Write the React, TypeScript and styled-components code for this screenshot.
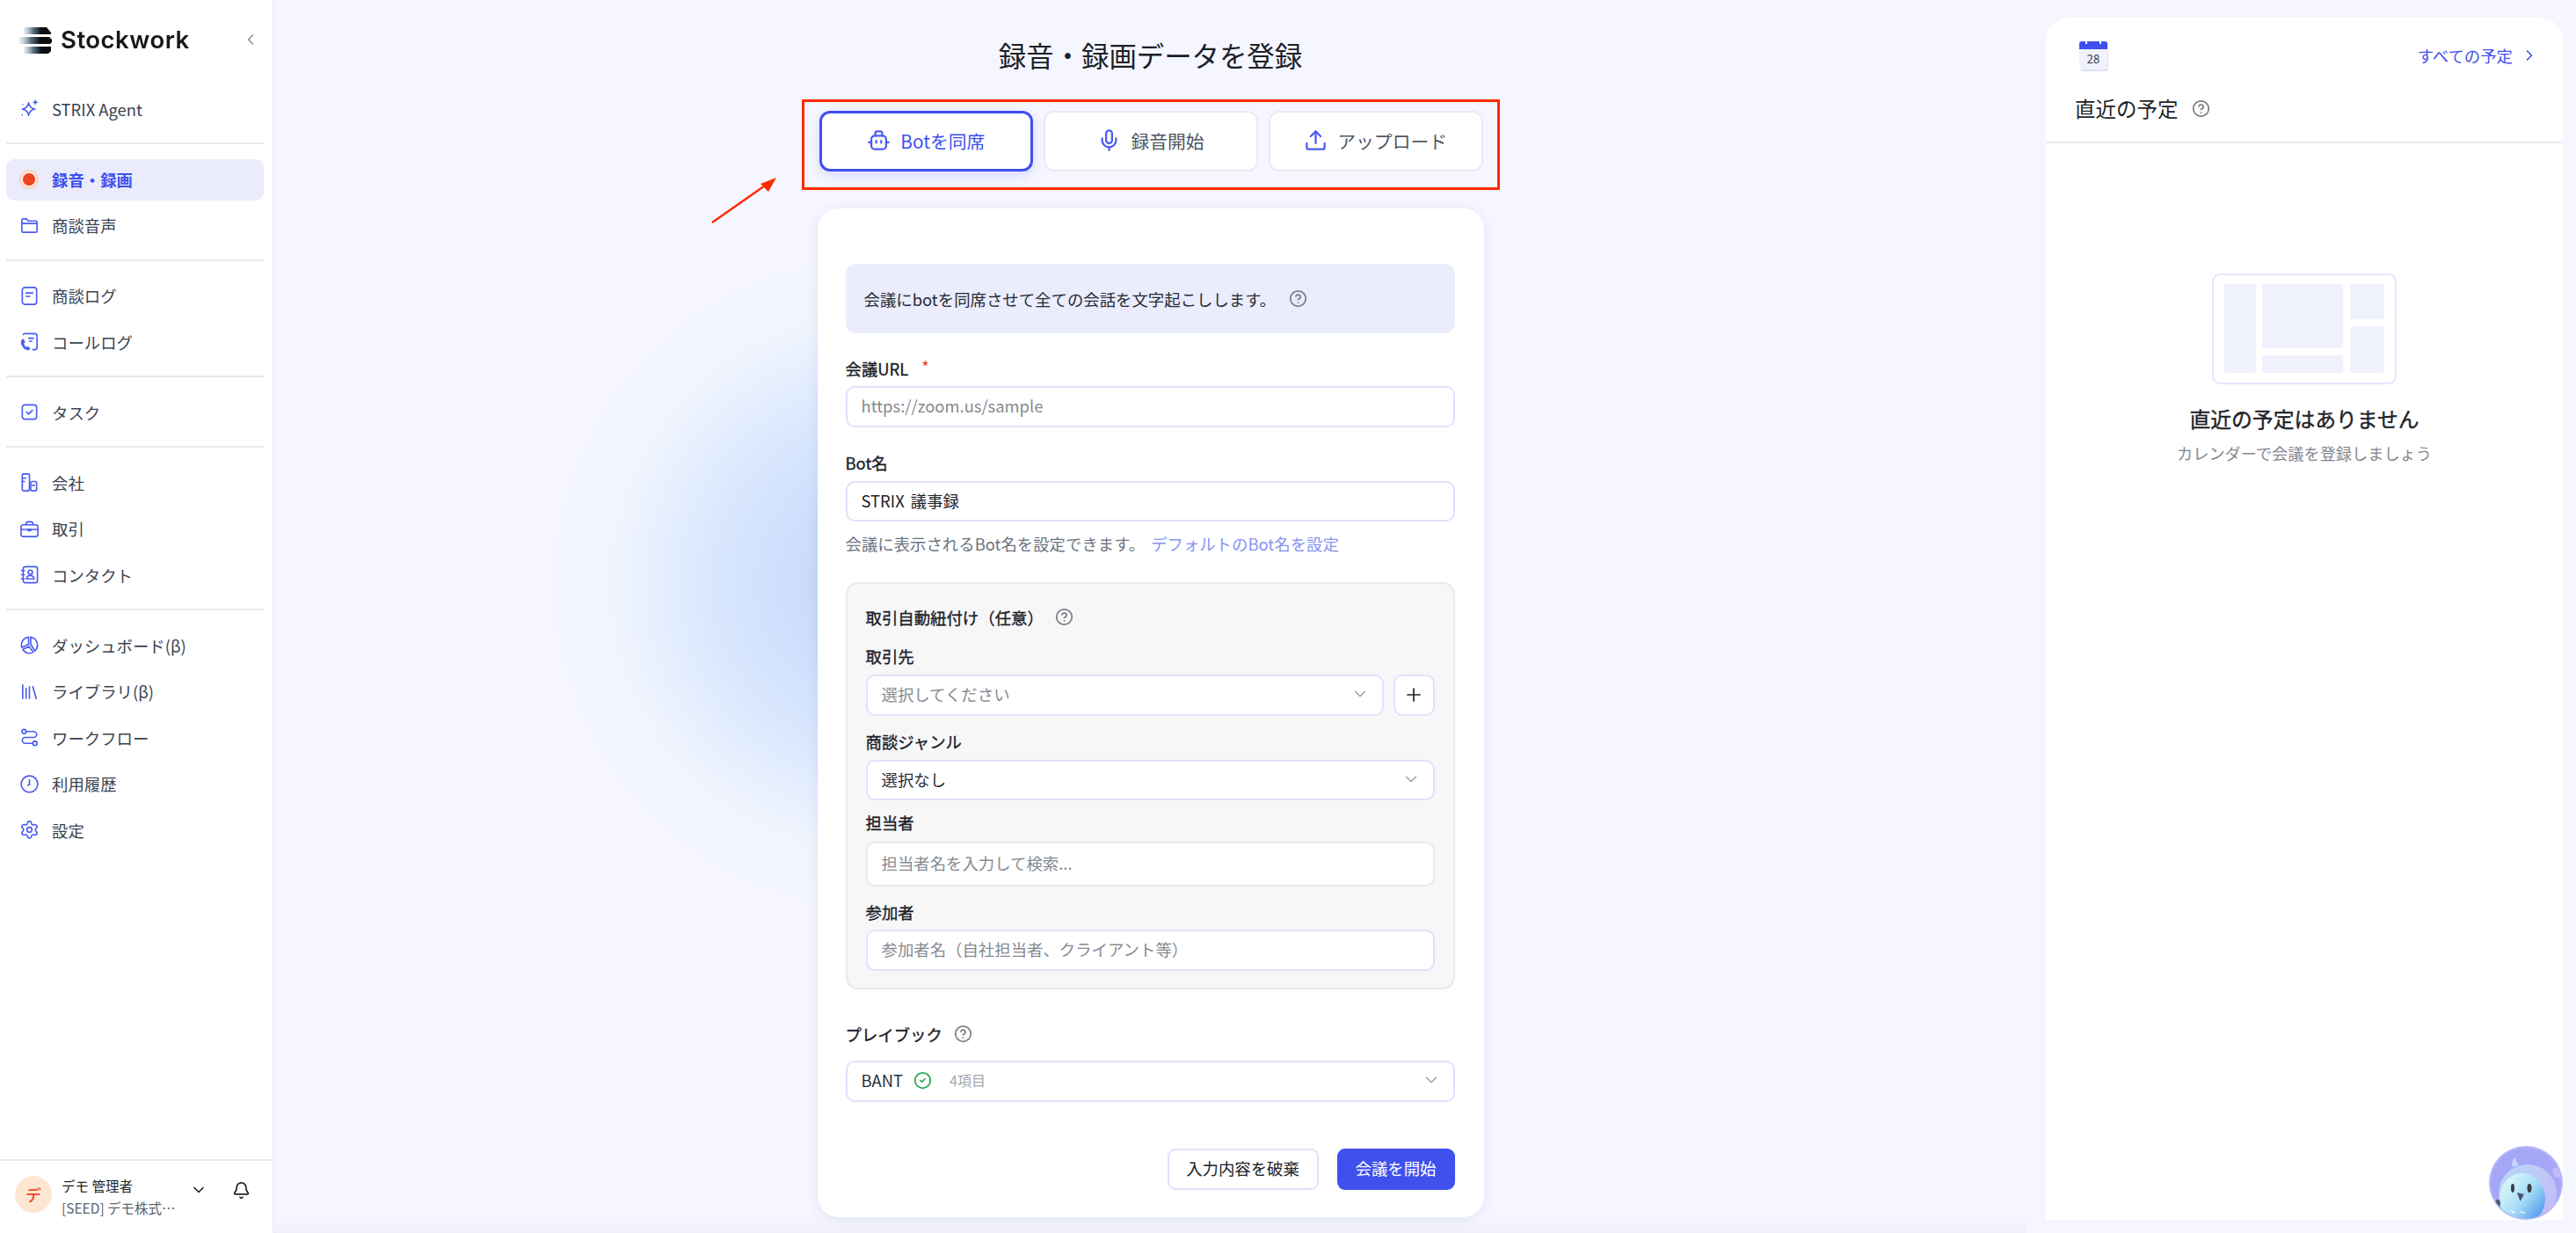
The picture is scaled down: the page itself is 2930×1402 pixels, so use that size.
import React from 'react';
import styled, { createGlobalStyle } from 'styled-components';
import {
  Bell,
  ChevronDown,
  ChevronLeft,
  ChevronRight,
  CircleCheck,
  CircleHelp,
  Library,
  Mic,
  Plus,
  Settings,
  Upload,
} from 'lucide-react';

const BLUE = '#3f50ec';
const ICON_BLUE = '#4a5cf0';
const BORDER = '#dfe2fb';

const GlobalStyle = createGlobalStyle`
  html, body, #root {
    margin: 0;
    height: 100%;
  }
  body {
    font-family: "Noto Sans CJK JP", "Noto Sans", sans-serif;
    color: #1f2329;
    background: #f5f6ff;
    overflow: hidden;
  }
  * {
    box-sizing: border-box;
  }
`;

const Page = styled.div`
  display: flex;
  width: 2930px;
  height: 1402px;
  overflow: hidden;
`;

/* sidebar */

const Sidebar = styled.nav`
  display: flex;
  flex-direction: column;
  width: 312px;
  flex-shrink: 0;
  background: #fff;
  border-right: 2px solid #eceefb;
`;

const LogoBar = styled.div`
  display: flex;
  align-items: center;
  justify-content: space-between;
  height: 84px;
  padding: 28px 15px 22px 22px;
`;

const Logo = styled.div`
  display: flex;
  align-items: center;
  gap: 10px;
  filter: blur(0.6px);
`;

const LogoText = styled.span`
  font-family: Inter, "Liberation Sans", sans-serif;
  font-size: 27.5px;
  font-weight: 600;
  letter-spacing: 0.5px;
  color: #16181c;
`;

const NavList = styled.div`
  margin: 0 10px 0 7px;
`;

const NavGroup = styled.div<{ $first?: boolean }>`
  display: flex;
  flex-direction: column;
  gap: 5.5px;
  padding: 16.5px 0 14.5px;
  border-top: ${(p) => (p.$first ? '0' : '2px solid #e8e9ef')};
`;

const NavItem = styled.div<{ $active?: boolean }>`
  display: flex;
  align-items: center;
  gap: 14px;
  height: 47px;
  padding: 0 0 1px 15px;
  border-radius: 9px;
  font-size: 18.4px;
  font-weight: ${(p) => (p.$active ? 700 : 400)};
  color: ${(p) => (p.$active ? BLUE : '#3a4352')};
  background: ${(p) => (p.$active ? '#eaecfd' : 'transparent')};

  svg {
    width: 23px;
    height: 23px;
    flex-shrink: 0;
    color: ${ICON_BLUE};
  }
`;

const RecordDot = styled.span`
  width: 22px;
  height: 22px;
  flex-shrink: 0;
  margin-right: 1px;
  border-radius: 50%;
  background: radial-gradient(circle, #ee4622 6.5px, #fdeee8 7.5px);
  border: 2px solid #fbd0c0;
`;

const SideFooter = styled.div`
  display: flex;
  align-items: center;
  margin-top: auto;
  height: 84px;
  padding: 0 17px 6px;
  border-top: 2px solid #e8e9ef;
`;

const Avatar = styled.div`
  display: flex;
  align-items: center;
  justify-content: center;
  width: 42px;
  height: 42px;
  flex-shrink: 0;
  border-radius: 50%;
  background: #fde7d3;
  color: #ec4a24;
  font-size: 18px;
  font-weight: 500;
`;

const UserInfo = styled.div`
  width: 143px;
  margin-left: 11px;
  padding-top: 5px;
`;

const UserName = styled.div`
  font-size: 15.5px;
  line-height: 24px;
  color: #1f2329;
`;

const UserOrg = styled.div`
  font-size: 15.5px;
  line-height: 26px;
  color: #5c6470;
  white-space: nowrap;
`;

const FooterActions = styled.div`
  display: flex;
  align-items: center;
  gap: 28px;
  margin: -10px 0 0 3px;
  color: #1f2329;
`;

/* main column */

const Main = styled.main`
  flex: 1;
  display: flex;
  flex-direction: column;
  align-items: center;
  padding-top: 40px;
  background:
    linear-gradient(to bottom, transparent 1382px, #eff0fa 1402px),
    radial-gradient(circle 375px at 688px 663px, #bfd2fb 0%, #dae8fe 53%, #eff4fe 80%, #f5f6ff 100%);
`;

const Column = styled.div`
  width: 758px;
`;

const Title = styled.h1`
  margin: 0;
  font-size: 31.4px;
  font-weight: 400;
  line-height: 46px;
  text-align: center;
  color: #1b2027;
`;

const TabRow = styled.div`
  position: relative;
  display: grid;
  grid-template-columns: repeat(3, 1fr);
  gap: 12px;
  height: 69px;
  margin: 40px 1px 0 2px;
`;

const Tab = styled.div<{ $active?: boolean }>`
  display: flex;
  align-items: center;
  justify-content: center;
  gap: 11px;
  padding-bottom: 2px;
  border-radius: 12px;
  background: #fff;
  font-size: 20.8px;
  color: ${(p) => (p.$active ? BLUE : '#4f5763')};
  border: ${(p) => (p.$active ? `3px solid ${BLUE}` : '2px solid #e9eaf3')};
  box-shadow: ${(p) => (p.$active ? '0 4px 12px rgba(63, 80, 236, 0.18)' : 'none')};

  svg {
    width: 27px;
    height: 27px;
    color: ${ICON_BLUE};
  }
`;

const RedFrame = styled.div`
  position: absolute;
  top: -13px;
  left: -20px;
  right: -19px;
  bottom: -21px;
  border: 3px solid #ff2a00;
  pointer-events: none;
`;

const Arrow = styled.svg`
  position: absolute;
  top: 72px;
  left: -127px;
  width: 85px;
  height: 60px;
`;

const Card = styled.section`
  height: 1147px;
  margin-top: 42px;
  padding: 63px 33px 32px 32px;
  background: #fff;
  border-radius: 24px;
  box-shadow: 0 2px 14px rgba(60, 70, 150, 0.1);
`;

const InfoBox = styled.div`
  display: flex;
  align-items: center;
  gap: 15px;
  height: 79px;
  padding: 0 21px;
  border-radius: 12px;
  background: #ebecfc;
  font-size: 18.4px;
  color: #262b33;
`;

const HelpIcon = styled(CircleHelp)`
  width: 21px;
  height: 21px;
  flex-shrink: 0;
  color: #7a7d83;
`;

const Label = styled.div<{ $top: number; $bottom: number }>`
  display: flex;
  align-items: center;
  gap: 13px;
  height: 24px;
  padding-bottom: 3px;
  margin: ${(p) => p.$top}px 0 ${(p) => p.$bottom}px;
  font-size: 18.4px;
  font-weight: 400;
  -webkit-text-stroke: 0.35px #1b2027;
  color: #1b2027;
`;

const Required = styled.span`
  margin: -6px 0 0 2px;
  color: #f0342a;
  font-size: 18px;
  -webkit-text-stroke: 0;
`;

const TextInput = styled.input<{ $tall?: boolean; $plain?: boolean }>`
  display: block;
  width: 100%;
  height: ${(p) => (p.$tall ? 51 : 46.5)}px;
  padding: 0 16px 2px;
  border: 2px solid ${(p) => (p.$plain ? '#e9eaf3' : BORDER)};
  border-radius: 10px;
  outline: none;
  background: #fff;
  font-family: inherit;
  font-size: 18.4px;
  word-spacing: 3px;
  color: #1f2329;

  &::placeholder {
    color: #858a92;
  }
`;

const HelpText = styled.p`
  margin: 13px 0 0;
  font-size: 18.4px;
  line-height: 24px;
  padding-bottom: 2px;
  color: #6b7380;
`;

const TextLink = styled.a`
  margin-left: 7px;
  color: #8593f5;
`;

const Panel = styled.div`
  height: 463px;
  margin-top: 30px;
  padding: 27px 21px 0;
  background: #f7f7f8;
  border: 2px solid #e9e9ec;
  border-radius: 14px;
`;

const SelectRow = styled.div`
  display: flex;
  gap: 11px;
`;

const Select = styled.div<{ $muted?: boolean }>`
  flex: 1;
  display: flex;
  align-items: center;
  justify-content: space-between;
  height: 46.5px;
  padding: 0 14px 2px 16px;
  background: #fff;
  border: 2px solid ${BORDER};
  border-radius: 10px;
  font-size: 18.4px;
  color: ${(p) => (p.$muted ? '#858a92' : '#2a2f37')};

  > svg {
    width: 22px;
    height: 22px;
    stroke-width: 1.5;
    color: #9a9ea5;
  }
`;

const SelectValue = styled.span`
  display: flex;
  align-items: center;
  gap: 12px;
`;

const GreenCheck = styled(CircleCheck)`
  width: 21px;
  height: 21px;
  color: #1fa855;
`;

const ItemCount = styled.span`
  margin-left: 8px;
  font-size: 16px;
  color: #a2a7b0;
`;

const SquareButton = styled.div`
  display: flex;
  align-items: center;
  justify-content: center;
  width: 47px;
  height: 46.5px;
  background: #fff;
  border: 2px solid ${BORDER};
  border-radius: 10px;
  color: #1f2329;
`;

const Actions = styled.div`
  display: flex;
  justify-content: flex-end;
  gap: 21px;
  margin-top: 53px;
`;

const GhostButton = styled.div`
  display: flex;
  align-items: center;
  justify-content: center;
  width: 172px;
  height: 47px;
  padding-bottom: 2px;
  background: #fff;
  border: 2px solid ${BORDER};
  border-radius: 9px;
  font-size: 18.4px;
  color: #1b2027;
`;

const PrimaryButton = styled.div`
  display: flex;
  align-items: center;
  justify-content: center;
  width: 134px;
  height: 47px;
  padding-bottom: 2px;
  background: ${BLUE};
  border-radius: 9px;
  font-size: 18.4px;
  color: #fff;
`;

/* right panel */

const Aside = styled.aside`
  position: relative;
  width: 588px;
  flex-shrink: 0;
  margin: 20px 15px 15px 22px;
  background: #fff;
  border-radius: 26px 26px 0 0;
`;

const AsideHeader = styled.header`
  height: 143px;
  padding: 27px 28px 0 33px;
  border-bottom: 2px solid #e8e9ef;
`;

const AsideTop = styled.div`
  display: flex;
  align-items: center;
  justify-content: space-between;
  padding-left: 5px;
`;

const CalendarIcon = styled.div`
  position: relative;
  width: 32px;
  height: 32px;
  padding-top: 9px;
  border-radius: 3px;
  background: linear-gradient(${BLUE} 9px, #f1f2fd 9px);
  box-shadow: 1px 2px 0 #dfe2fb;
  font-size: 13px;
  line-height: 22px;
  text-align: center;
  color: #343942;

  &::before,
  &::after {
    content: '';
    position: absolute;
    top: -1px;
    width: 2px;
    height: 4px;
    background: #fff;
  }
  &::before {
    left: 7px;
  }
  &::after {
    right: 7px;
  }
`;

const AllLink = styled.a`
  display: flex;
  align-items: center;
  gap: 9px;
  font-size: 18.4px;
  color: ${BLUE};
`;

const AsideTitle = styled.h2`
  display: flex;
  align-items: center;
  gap: 15px;
  margin: 27px 0 0;
  font-size: 23.5px;
  font-weight: 400;
  line-height: 34px;
  color: #1f2329;
`;

const Empty = styled.div`
  display: flex;
  flex-direction: column;
  align-items: center;
  padding-top: 148px;
`;

const EmptyTitle = styled.div`
  margin-top: 22px;
  font-size: 23.8px;
  font-weight: 400;
  -webkit-text-stroke: 0.4px #1f2329;
  line-height: 34px;
  color: #1f2329;
`;

const EmptyText = styled.div`
  margin-top: 9px;
  font-size: 18.2px;
  line-height: 26px;
  color: #85888f;
`;

const HelperBird = styled.svg`
  position: absolute;
  right: 0;
  bottom: 0;
  width: 84px;
  height: 84px;
`;

/* icons */

const StrokeIcon: React.FC<{ children: React.ReactNode }> = ({ children }) => (
  <svg viewBox="0 0 24 24" fill="none" stroke="currentColor" strokeWidth="1.7" strokeLinecap="round" strokeLinejoin="round">
    {children}
  </svg>
);

const LogoMark = () => (
  <svg width="37" height="33" viewBox="0 0 37 33">
    <defs>
      <linearGradient id="logoFade" x1="0" x2="1" y1="0" y2="0">
        <stop offset="0" stopColor="#b4c6d6" stopOpacity="0.3" />
        <stop offset="0.35" stopColor="#56707f" />
        <stop offset="0.65" stopColor="#0c0e12" />
        <stop offset="1" stopColor="#0c0e12" />
      </linearGradient>
    </defs>
    <g fill="url(#logoFade)">
      <path d="M5 2h26l5 6v2H5z" />
      <path d="M0 13h34l3 3v3l-2 2H0z" />
      <path d="M5 24h31v5l-3 3H5z" />
    </g>
  </svg>
);

const Sparkle = () => (
  <StrokeIcon>
    <path d="M11 5c.8 4.6 2.6 6.600 7.500 7.500-4.900.9-6.700 2.900-7.500 7.500-.8-4.600-2.600-6.600-7.500-7.500C8.400 11.600 10.200 9.600 11 5z" />
    <path d="M19 2.500v4M17 4.500h4" />
    <path d="M3.500 19.500h.01M4 7h.01" />
  </StrokeIcon>
);

const FolderIcon = () => (
  <StrokeIcon>
    <path d="M3 5.500A1.500 1.500 0 0 1 4.500 4h4l2 2.500h9A1.500 1.500 0 0 1 21 8v10.500a1.500 1.500 0 0 1-1.500 1.500h-15A1.500 1.500 0 0 1 3 18.500z" />
    <path d="M3 9.500h18" />
  </StrokeIcon>
);

const LogIcon = () => (
  <StrokeIcon>
    <rect x="3.500" y="2" width="17" height="20" rx="3" />
    <path d="M8 8.500h8M8 12.500h4.500" />
  </StrokeIcon>
);

const CallLogIcon = () => (
  <svg viewBox="0 0 24 24" fill="none" stroke="currentColor" strokeWidth="1.7" strokeLinecap="round" strokeLinejoin="round">
    <path d="M6 2.500h12a3 3 0 0 1 3 3v13a3 3 0 0 1-3 3h-2M6 2.500 4.500 3.500" />
    <path d="M11 8h6M12 11.500h3" />
    <path fill="currentColor" stroke="none" d="M5 8.500c-2 .5-3.500 2-3 5 .6 3.800 3.500 7.300 7 8.500 1.800.5 3.600-.4 4-2.200l-3.200-2.400-1.800 1.100c-1.500-1.300-2.300-2.800-2.700-4.600l1.700-1z" />
  </svg>
);

const TaskIcon = () => (
  <StrokeIcon>
    <rect x="3.500" y="3.500" width="17" height="17" rx="3" />
    <path d="m8.500 12 2.500 2.500 4.500-4.500" />
  </StrokeIcon>
);

const CompanyIcon = () => (
  <StrokeIcon>
    <rect x="3.500" y="2" width="8.500" height="20" rx="2" />
    <rect x="13.500" y="11" width="7" height="11" rx="2" />
    <path d="M3.500 7h4M3.500 11h2.500M15.500 15.500h2.500" />
  </StrokeIcon>
);

const DealIcon = () => (
  <StrokeIcon>
    <rect x="2" y="7" width="20" height="14" rx="2.500" />
    <path d="M8 7V5.500A2 2 0 0 1 10 3.500h4a2 2 0 0 1 2 2V7M2 12.500h20" />
    <path d="M10.500 12.500h3v1.500h-3z" fill="currentColor" />
  </StrokeIcon>
);

const ContactIcon = () => (
  <StrokeIcon>
    <rect x="4.500" y="2.500" width="17" height="19" rx="2.500" />
    <circle cx="13" cy="9" r="2.500" />
    <path d="M8.500 17c0-2.500 2-4 4.500-4s4.500 1.500 4.500 4z" />
    <path d="M2.500 7h3.500M2.500 12h3.500M2.500 17h3.500" />
  </StrokeIcon>
);

const DashboardIcon = () => (
  <StrokeIcon>
    <path d="M11 2.500a9.500 9.500 0 0 0-8.500 9.500c0 1 .2 2 .5 2.800L11 11z" />
    <path d="M13.500 2.500a9.500 9.500 0 0 1 8 9.500c0 2.800-1.200 5.300-3.100 7L13.500 11z" />
    <path d="M4 17.200 11.500 13.500l5 7A9.500 9.500 0 0 1 4 17.200z" />
  </StrokeIcon>
);

const FlowIcon = () => (
  <StrokeIcon>
    <circle cx="5.500" cy="5" r="2.500" />
    <circle cx="18.500" cy="19" r="2.500" />
    <path d="M8 5h9a3.500 3.500 0 0 1 0 7H7a3.500 3.500 0 0 0 0 7h9" />
  </StrokeIcon>
);

const ClockIcon = () => (
  <StrokeIcon>
    <circle cx="12" cy="12" r="9.800" />
    <path d="M12 7v5.500l-2 1" />
  </StrokeIcon>
);

const BotIcon = () => (
  <svg viewBox="0 0 24 24" fill="none" stroke="currentColor" strokeWidth="2" strokeLinecap="round" strokeLinejoin="round">
    <rect x="4.500" y="7.500" width="15" height="13.500" rx="3.500" />
    <path d="M8.500 7.500V5A2 2 0 0 1 10.500 3h3a2 2 0 0 1 2 2v2.500" />
    <path d="M2 14h2.500M19.500 14H22M9.500 12.500v2M14.500 12.500v2" />
  </svg>
);

const ArrowDrawing = () => (
  <Arrow viewBox="0 0 85 60">
    <path d="M5 55 68 11" stroke="#ff2a00" strokeWidth="2.500" />
    <path d="M78 4 60 11 69 20z" fill="#ff2a00" />
  </Arrow>
);

const EmptyDrawing = () => (
  <svg width="210" height="126" viewBox="0 0 210 126">
    <rect x="1" y="1" width="208" height="124" rx="8" fill="#fff" stroke="#e2e5fc" strokeWidth="2" />
    <g fill="#eff1fd">
      <rect x="14" y="12" width="36" height="101" rx="3" />
      <rect x="57" y="12" width="92" height="73" rx="3" />
      <rect x="57" y="93" width="92" height="20" rx="3" />
      <rect x="157" y="12" width="39" height="40" rx="3" />
      <rect x="157" y="60" width="39" height="53" rx="3" />
    </g>
  </svg>
);

const Bird = () => (
  <HelperBird viewBox="0 0 84 84">
    <defs>
      <linearGradient id="birdBody" x1="0.1" y1="0.2" x2="0.9" y2="0.9">
        <stop offset="0" stopColor="#d9f6fb" />
        <stop offset="0.5" stopColor="#a5dcf6" />
        <stop offset="1" stopColor="#4f96ec" />
      </linearGradient>
      <linearGradient id="birdHead" x1="0" y1="0" x2="1" y2="0.6">
        <stop offset="0" stopColor="#b9d9f8" />
        <stop offset="1" stopColor="#c3bdf7" />
      </linearGradient>
      <clipPath id="birdClip">
        <circle cx="42" cy="42" r="40.500" />
      </clipPath>
    </defs>
    <circle cx="42" cy="42" r="42" fill="#b4b6f8" />
    <circle cx="42" cy="42" r="40" fill="#a5a7f6" />
    <g clipPath="url(#birdClip)">
      <path d="M27 24c-2-5 0-9 3-11 0 4 2 6 4 9z" fill="#c6d6f9" />
      <path d="M72 26c3-1 5-1 7-3l3 14-8-2z" fill="#c3bdf7" />
      <ellipse cx="44" cy="54" rx="33" ry="33" fill="url(#birdHead)" />
      <ellipse cx="38" cy="60" rx="26" ry="29" fill="url(#birdBody)" />
      <ellipse cx="10" cy="65" rx="3" ry="4" fill="#4f5a72" />
      <ellipse cx="27" cy="48" rx="2" ry="5" fill="#3a3f4c" />
      <ellipse cx="46" cy="48" rx="2.500" ry="5" fill="#3a3f4c" />
      <path d="M32 53l8 2-4.500 8z" fill="#4b5268" />
      <path d="M25 74l4 2M36 75l4 1" stroke="#e6f6fd" strokeWidth="1.500" strokeLinecap="round" />
    </g>
  </HelperBird>
);

const NAV_GROUPS: { icon: React.ReactNode; label: string; active?: boolean }[][] = [
  [{ icon: <Sparkle />, label: 'STRIX Agent' }],
  [
    { icon: <RecordDot />, label: '録音・録画', active: true },
    { icon: <FolderIcon />, label: '商談音声' },
  ],
  [
    { icon: <LogIcon />, label: '商談ログ' },
    { icon: <CallLogIcon />, label: 'コールログ' },
  ],
  [{ icon: <TaskIcon />, label: 'タスク' }],
  [
    { icon: <CompanyIcon />, label: '会社' },
    { icon: <DealIcon />, label: '取引' },
    { icon: <ContactIcon />, label: 'コンタクト' },
  ],
  [
    { icon: <DashboardIcon />, label: 'ダッシュボード(β)' },
    { icon: <Library strokeWidth={1.7} />, label: 'ライブラリ(β)' },
    { icon: <FlowIcon />, label: 'ワークフロー' },
    { icon: <ClockIcon />, label: '利用履歴' },
    { icon: <Settings strokeWidth={1.7} />, label: '設定' },
  ],
];

const App: React.FC = () => (
  <Page>
    <GlobalStyle />
    <Sidebar>
      <LogoBar>
        <Logo>
          <LogoMark />
          <LogoText>Stockwork</LogoText>
        </Logo>
        <ChevronLeft size={20} color="#8d929b" />
      </LogoBar>
      <NavList>
        {NAV_GROUPS.map((group, i) => (
          <NavGroup key={i} $first={i === 0}>
            {group.map((item) => (
              <NavItem key={item.label} $active={item.active}>
                {item.icon}
                {item.label}
              </NavItem>
            ))}
          </NavGroup>
        ))}
      </NavList>
      <SideFooter>
        <Avatar>デ</Avatar>
        <UserInfo>
          <UserName>デモ 管理者</UserName>
          <UserOrg>[SEED] デモ株式…</UserOrg>
        </UserInfo>
        <FooterActions>
          <ChevronDown size={20} />
          <Bell size={21} />
        </FooterActions>
      </SideFooter>
    </Sidebar>

    <Main>
      <Column>
        <Title>録音・録画データを登録</Title>
        <TabRow>
          <Tab $active>
            <BotIcon />
            Botを同席
          </Tab>
          <Tab>
            <Mic strokeWidth={2} />
            録音開始
          </Tab>
          <Tab>
            <Upload strokeWidth={2} />
            アップロード
          </Tab>
          <RedFrame />
          <ArrowDrawing />
        </TabRow>

        <Card>
          <InfoBox>
            会議にbotを同席させて全ての会話を文字起こしします。
            <HelpIcon />
          </InfoBox>

          <Label $top={29} $bottom={7}>
            会議URL
            <Required>*</Required>
          </Label>
          <TextInput readOnly placeholder="https://zoom.us/sample" />

          <Label $top={30} $bottom={7}>
            Bot名
          </Label>
          <TextInput readOnly defaultValue="STRIX 議事録" />
          <HelpText>
            会議に表示されるBot名を設定できます。
            <TextLink>デフォルトのBot名を設定</TextLink>
          </HelpText>

          <Panel>
            <Label $top={0} $bottom={20}>
              取引自動紐付け（任意）
              <HelpIcon />
            </Label>

            <Label $top={0} $bottom={8}>
              取引先
            </Label>
            <SelectRow>
              <Select $muted>
                選択してください
                <ChevronDown />
              </Select>
              <SquareButton>
                <Plus size={24} strokeWidth={1.7} />
              </SquareButton>
            </SelectRow>

            <Label $top={19} $bottom={7}>
              商談ジャンル
            </Label>
            <Select>
              選択なし
              <ChevronDown />
            </Select>

            <Label $top={14.5} $bottom={8}>
              担当者
            </Label>
            <TextInput readOnly $tall $plain placeholder="担当者名を入力して検索..." />

            <Label $top={18.5} $bottom={7}>
              参加者
            </Label>
            <TextInput readOnly placeholder="参加者名（自社担当者、クライアント等）" />
          </Panel>

          <Label $top={40} $bottom={17}>
            プレイブック
            <HelpIcon />
          </Label>
          <Select>
            <SelectValue>
              BANT
              <GreenCheck />
              <ItemCount>4項目</ItemCount>
            </SelectValue>
            <ChevronDown />
          </Select>

          <Actions>
            <GhostButton>入力内容を破棄</GhostButton>
            <PrimaryButton>会議を開始</PrimaryButton>
          </Actions>
        </Card>
      </Column>
    </Main>

    <Aside>
      <AsideHeader>
        <AsideTop>
          <CalendarIcon>28</CalendarIcon>
          <AllLink>
            すべての予定
            <ChevronRight size={20} />
          </AllLink>
        </AsideTop>
        <AsideTitle>
          直近の予定
          <HelpIcon />
        </AsideTitle>
      </AsideHeader>
      <Empty>
        <EmptyDrawing />
        <EmptyTitle>直近の予定はありません</EmptyTitle>
        <EmptyText>カレンダーで会議を登録しましょう</EmptyText>
      </Empty>
      <Bird />
    </Aside>
  </Page>
);

export default App;
